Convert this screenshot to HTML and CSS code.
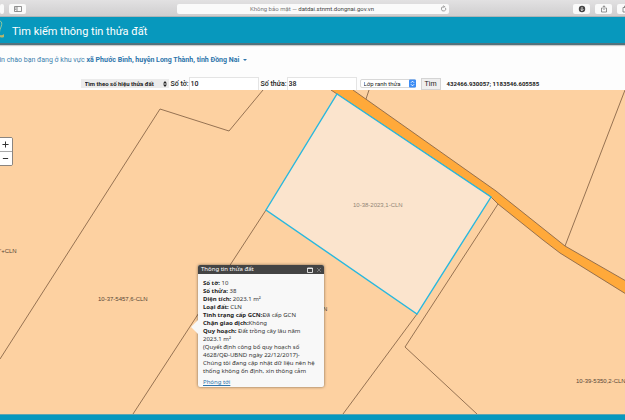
FILE: index.html
```html
<!DOCTYPE html>
<html lang="vi">
<head>
<meta charset="utf-8">
<meta name="viewport" content="width=device-width, initial-scale=1">
<title>Tìm kiếm thông tin thửa đất</title>
<link rel="stylesheet" href="styles.css">
</head>
<body>
<div class="page">
  <div class="browser">
    <div class="browser-side">
      <button class="tool tool-back" type="button" aria-label="Trang sau"><svg viewBox="0 0 8 8"><path d="M3 2l2 2-2 2"/></svg></button>
      <button class="tool" type="button" aria-label="Thanh bên"><svg viewBox="0 0 8 8"><path d="M.5 1.5h7v5h-7zM3 1.5v5M1.2 3h1M1.2 4.500h1"/></svg></button>
    </div>
    <div class="address">
      <span class="address-text">Không bảo mật — <span class="host">datdai.stnmt.dongnai.gov.vn</span></span>
      <button class="reload" type="button" aria-label="Tải lại"><svg viewBox="0 0 8 8"><path d="M6.300 3.200A2.500 2.500 0 1 1 4 1.900h1M4 .6l1.300 1.300L4 3.200"/></svg></button>
    </div>
    <div class="browser-side browser-end">
      <button class="tool" type="button" aria-label="Tải về"><svg viewBox="0 0 8 8"><circle class="disc" cx="4" cy="4" r="3.200"/><path class="arrow" d="M4 2v3.600M2.600 4.300L4 5.700l1.400-1.400"/></svg></button>
      <button class="tool" type="button" aria-label="Chia sẻ"><svg viewBox="0 0 8 8"><path d="M2.800 3H1.500v4h5V3H5.200M4 5V.8M2.800 2L4 .8 5.200 2"/></svg></button>
      <button class="tool tool-tabs" type="button" aria-label="Các thẻ"><svg viewBox="0 0 8 8"><path d="M1 2.500h4.500V7H1zM2.500 2.500V1H7v4.500H5.500"/></svg></button>
    </div>
  </div>

  <header class="header">
    <svg class="logo" viewBox="0 0 5 22" aria-hidden="true"><path d="M0 2q3 1 1 6t-1 5" fill="none" stroke="#8fc7a0" stroke-width="1"/><path d="M0 16q2 1 4-1v3q-2 1-4 0z" fill="#b9b56a"/></svg>
    <h1 class="title">Tìm kiếm thông tin thửa đất</h1>
  </header>

  <p class="greeting">Xin chào bạn đang ở khu vực <a class="area" href="#khu-vuc">xã Phước Bình, huyện Long Thành, tỉnh Đồng Nai<span class="caret"></span></a></p>

  <form class="search">
    <span class="picker">
      <select class="mode" aria-label="Kiểu tìm kiếm"><option>Tìm theo số hiệu thửa đất</option></select>
      <svg class="mode-arrows" viewBox="0 0 4 6" aria-hidden="true"><path d="M0 2.500L2 0l2 2.500zM0 3.500h4L2 6z"/></svg>
    </span>
    <label class="sheet-label" for="sheet">Số tờ:</label>
    <input class="field" id="sheet" type="text" value="10">
    <label class="plot-label" for="plot">Số thửa:</label>
    <input class="field" id="plot" type="text" value="38">
    <span class="picker layer-picker">
      <select class="layer" aria-label="Lớp bản đồ"><option>Lớp ranh thửa</option></select>
      <svg class="layer-arrows" viewBox="0 0 7 8" aria-hidden="true"><rect width="7" height="8" rx="1"/><path d="M2 3.200L3.500 1.700 5 3.200M2 4.800l1.500 1.500L5 4.800"/></svg>
    </span>
    <button class="submit" type="button">Tìm</button>
    <output class="coords">432466.930057; 1183546.605585</output>
  </form>

  <main class="map">
    <svg class="parcels" viewBox="0 0 625 324" preserveAspectRatio="xMinYMin slice">
      <path class="road" d="M331 0L353 0L496 101L565 156L626 191V204L560 163L543 150L498 114L491 107L337 4Z"/>
      <path class="edge" d="M353 0L496 101L565 156L626 191M331 0L337 4L491 107L498 114L543 150L560 163L626 204"/>
      <path class="edge" d="M0 269L160 19L229 41L263 0M369 0L366 9M565 156L625 0M266 120L133 324M417 224L343 324M498 114L405 257L477 324"/>
      <path class="selected" d="M337 4L491 107L417 224L266 120Z"/>
      <text x="0" y="163">'+CLN</text>
      <text x="98" y="211">10-37-5457,6-CLN</text>
      <text class="muted" x="353" y="117">10-38-2023,1-CLN</text>
      <text x="323" y="221">N</text>
      <text x="576" y="293">10-39-5350,2-CLN</text>
    </svg>
    <div class="zoom">
      <button type="button" aria-label="Phóng to"><svg viewBox="0 0 8 8"><path d="M0.500 4h7M4 .5v7"/></svg></button>
      <button type="button" aria-label="Thu nhỏ"><svg viewBox="0 0 8 8"><path d="M1 4h6"/></svg></button>
    </div>
    <section class="popup">
      <div class="popup-head">
        <h2>Thông tin thửa đất</h2>
        <button type="button" aria-label="Phóng lớn"><svg viewBox="0 0 6 6"><path d="M.5 1h5v4.500h-5z"/><path d="M.5 1.500h5"/></svg></button>
        <button class="close" type="button" aria-label="Đóng"><svg viewBox="0 0 6 6"><path d="M1 1l4 4M5 1L1 5"/></svg></button>
      </div>
      <div class="popup-body">
        <div><b>Số tờ:</b> 10</div>
        <div><b>Số thửa:</b> 38</div>
        <div><b>Diện tích:</b> 2023.1 m²</div>
        <div><b>Loại đất:</b> CLN</div>
        <div><b>Tình trạng cấp GCN:</b>Đã cấp GCN</div>
        <div><b>Chặn giao dịch:</b>Không</div>
        <div><b>Quy hoạch:</b> Đất trồng cây lâu năm<br>2023.1 m²</div>
        <div>(Quyết định công bố quy hoạch số<br>4628/QĐ-UBND ngày 22/12/2017)-<br>Chúng tôi đang cập nhật dữ liệu nên hệ<br>thống không ổn định, xin thông cảm</div>
        <a href="#phong-toi">Phóng tới</a>
      </div>
    </section>
  </main>
  <footer class="footer"></footer>
</div>
</body>
</html>
```
FILE: styles.css
```css
* { box-sizing: border-box; }
body { margin: 0; font-family: Roboto, "Liberation Sans", sans-serif; color: #333; }
button, input, select { font: inherit; color: inherit; margin: 0; padding: 0; }
.page { display: flex; flex-direction: column; min-height: 100vh; overflow: hidden; background: #fdfdfd; }

.browser { display: flex; align-items: center; height: 17px; padding-top: 1px; background: linear-gradient(#e2e1e2, #cfcecf); border-bottom: 1px solid #aeb4b6; }
.browser-side { display: flex; flex: 1; gap: 5px; }
.browser-end { justify-content: flex-end; }
.tool { display: flex; align-items: center; justify-content: center; width: 17px; height: 10px; border: 0; border-radius: 2px; background: #fafafa; }
.tool svg { width: 8px; height: 8px; fill: none; stroke: #777; stroke-width: 0.8; }
.tool .disc { fill: #444; stroke: none; }
.tool .arrow { stroke: #fff; }
.tool-back { width: 4px; }
.tool-back svg { display: none; }
.tool-tabs { margin-right: -9px; }
.address { display: flex; align-items: center; width: 272px; height: 10px; border-radius: 2px; background: #fafafa; font-size: 6px; line-height: 10px; color: #777; }
.address-text { flex: 1; padding-left: 8px; text-align: center; }
.host { color: #444; }
.reload { display: flex; margin-right: 2px; border: 0; background: none; }
.reload svg { width: 7px; height: 7px; fill: none; stroke: #777; stroke-width: 0.8; }

.header { display: flex; align-items: center; height: 28px; gap: 7px; background: #0798bd; border-bottom: 2px solid #53727c; box-shadow: 0 1px 1px #ccc; }
.logo { width: 5px; height: 22px; }
.title { margin: 0; padding-top: 4px; font-size: 11px; line-height: 16px; font-weight: 400; color: #fff; }

.greeting { margin: 10px 0 12px -5px; font-size: 7px; line-height: 10px; color: #3b7fae; white-space: nowrap; }
.area { font-weight: 700; color: #2e75ab; text-decoration: none; }
.caret { display: inline-block; margin-left: 4px; vertical-align: middle; border: 2px solid transparent; border-top-color: #2e75ab; border-bottom: 0; }

.search { display: flex; align-items: center; justify-content: center; height: 13px; font-size: 7px; line-height: 10px; font-weight: 500; color: #222; white-space: nowrap; }
.picker { position: relative; display: flex; }
.mode { appearance: none; width: 88px; height: 9px; padding-left: 4px; border: 0; background: #ebebeb; font-size: 6px; line-height: 9px; font-weight: 700; }
.mode-arrows { position: absolute; right: 2px; top: 2px; width: 4px; height: 6px; fill: #222; }
.sheet-label { width: 20px; padding-left: 2px; }
.plot-label { width: 28px; padding-left: 2px; }
.field { width: 70px; height: 13px; padding-left: 1px; border: 1px solid #e4e4e4; border-bottom: 0; background: #fff; }
.layer-picker { margin: 0 5px 0 3px; }
.layer { appearance: none; width: 56px; height: 9px; padding-left: 3px; border: 1px solid #d8d8d8; border-radius: 2px; background: #fff; font-size: 6px; line-height: 7px; font-weight: 400; }
.layer-arrows { position: absolute; right: 0; top: 0; width: 7px; height: 9px; fill: #3b8cf5; }
.layer-arrows path { fill: none; stroke: #fff; }
.submit { width: 20px; height: 12px; border: 1px solid #d4d4d4; background: #efefef; line-height: 10px; font-weight: 400; }
.coords { min-width: 104px; padding-left: 6px; font-size: 6px; font-weight: 700; }

.map { position: relative; flex: 1; min-height: 324px; background: #fdd1a1; overflow: hidden; }
.parcels { position: absolute; inset: 0; width: 100%; height: 100%; }
.parcels text { font: 6px "Liberation Sans", sans-serif; fill: #554637; }
.parcels .muted { fill: #918476; }
.road { fill: #ffa93a; }
.edge { fill: none; stroke: #8a684a; stroke-width: 0.9; }
.selected { fill: #fbe4cd; stroke: #28b8df; stroke-width: 1.4; }

.zoom { position: absolute; left: -2px; top: 47px; width: 15px; border: 1px solid #8a8580; border-radius: 2px; background: #fff; overflow: hidden; }
.zoom button { display: flex; align-items: center; justify-content: center; width: 100%; height: 13px; border: 0; background: #fff; }
.zoom button + button { height: 14px; border-top: 1px solid #aaa; }
.zoom svg { width: 7px; height: 7px; fill: none; stroke: #333; stroke-width: 1.2; }

.popup { position: absolute; left: 198px; top: 175px; width: 126px; border-radius: 2px; background: #f8f8f8; box-shadow: 0 0 3px #0008; font-family: "Noto Sans", "DejaVu Sans", sans-serif; font-size: 6px; line-height: 8px; color: #333; white-space: nowrap; }
.popup::before { content: ""; position: absolute; left: -7px; top: 55px; border: 7px solid transparent; border-right-color: #f8f8f8; border-left: 0; }
.popup-head { display: flex; align-items: center; gap: 3px; height: 9px; padding: 0 2px 0 3px; border-radius: 2px 2px 0 0; background: #444; color: #fff; }
.popup-head h2 { flex: 1; margin: 0; font-size: 6px; line-height: 9px; font-weight: 400; }
.popup-head button { display: flex; border: 0; background: none; }
.popup-head svg { width: 6px; height: 6px; fill: none; stroke: #fff; stroke-width: 0.8; }
.popup-head .close svg { stroke: #888; }
.popup-body { padding: 5px 4px 1px 5px; }
.popup-body a { display: block; margin-top: 3px; color: #2e75ab; }
.popup-body b { color: #222; }

.footer { height: 6px; background: #0798bd; border-top: 1px solid #5fa5b0; }
```
